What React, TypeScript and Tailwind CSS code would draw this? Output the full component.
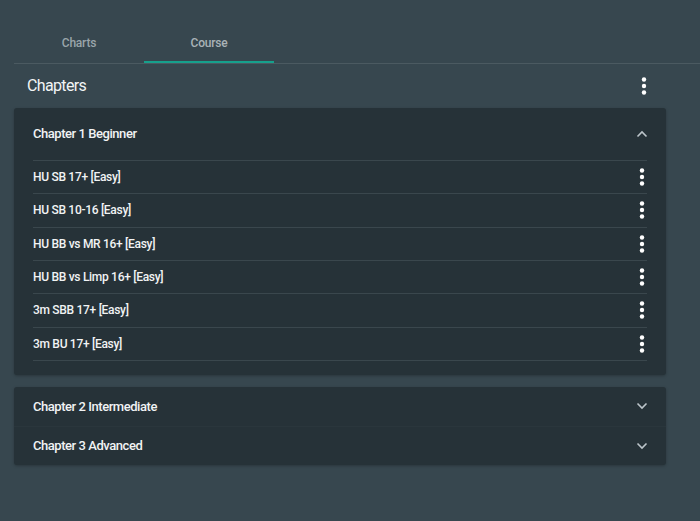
import React from "react";

const Kebab = () => (
  <svg width="6" height="20" viewBox="0 0 6 20" className="block">
    <circle cx="3" cy="3.5" r="2.2" fill="#ffffff" />
    <circle cx="3" cy="10" r="2.2" fill="#ffffff" />
    <circle cx="3" cy="16.5" r="2.2" fill="#ffffff" />
  </svg>
);

const Chevron = ({ up }: { up?: boolean }) => (
  <svg width="12" height="8" viewBox="0 0 12 8" className="block">
    <path
      d={up ? "M1.5 6.5 L6 2 L10.5 6.5" : "M1.5 1.5 L6 6 L10.5 1.5"}
      fill="none"
      stroke="#bcc5ca"
      strokeWidth="1.6"
    />
  </svg>
);

const lessons = [
  "HU SB 17+ [Easy]",
  "HU SB 10-16 [Easy]",
  "HU BB vs MR 16+ [Easy]",
  "HU BB vs Limp 16+ [Easy]",
  "3m SBB 17+ [Easy]",
  "3m BU 17+ [Easy]",
];

export default function App() {
  return (
    <div
      className="w-full h-[521px] bg-[#37474f] text-white"
      style={{ fontFamily: "Roboto, 'Liberation Sans', sans-serif" }}
    >
      {/* TABS */}
      <div className="pt-[25px] ml-[14px] flex border-b border-[#4b5a61]">
        <div className="w-[130px] h-[38px] flex items-center justify-center text-[12px] font-medium tracking-[-0.2px] text-[#9aa5aa] border-b-2 border-transparent">
          Charts
        </div>
        <div className="w-[130px] h-[38px] flex items-center justify-center text-[12px] font-medium tracking-[-0.2px] text-[#a9b3b7] border-b-2 border-[#16a08c]">
          Course
        </div>
      </div>

      {/* HEADER */}
      <div className="w-[666px] h-[44px] pl-[27px] pr-[19px] flex items-center justify-between">
        <span className="text-[16px] tracking-[-0.65px] text-[#f3f5f6]">Chapters</span>
        <Kebab />
      </div>

      {/* CHAPTER 1 */}
      <div className="ml-[14px] w-[652px] bg-[#263238] rounded-[3px] shadow-[0_1px_3px_rgba(0,0,0,0.25)] pb-[14px]">
        <div className="h-[52px] pl-[19px] pr-[18px] flex items-center justify-between">
          <span className="text-[13px] font-medium tracking-[-0.45px] text-[#f1f3f4]">
            Chapter 1 Beginner
          </span>
          <Chevron up />
        </div>
        <div className="mx-[19px] border-b border-[#3a474d]">
          {lessons.map((l) => (
            <div
              key={l}
              className="h-[33.33px] border-t border-[#3a474d] flex items-center justify-between pr-[2px]"
            >
              <span className="text-[12px] font-medium tracking-[-0.3px] text-[#f1f3f4]">{l}</span>
              <Kebab />
            </div>
          ))}
        </div>
      </div>

      {/* CHAPTER 2 / 3 */}
      <div className="ml-[14px] mt-[12px] w-[652px] bg-[#263238] rounded-[3px] shadow-[0_1px_3px_rgba(0,0,0,0.25)]">
        {["Chapter 2 Intermediate", "Chapter 3 Advanced"].map((c, i) => (
          <div
            key={c}
            className={`h-[39px] pl-[19px] pr-[18px] flex items-center justify-between ${
              i > 0 ? "border-t border-[#2a363c]" : ""
            }`}
          >
            <span className="text-[13px] font-medium tracking-[-0.45px] text-[#f1f3f4]">{c}</span>
            <Chevron />
          </div>
        ))}
      </div>
    </div>
  );
}
